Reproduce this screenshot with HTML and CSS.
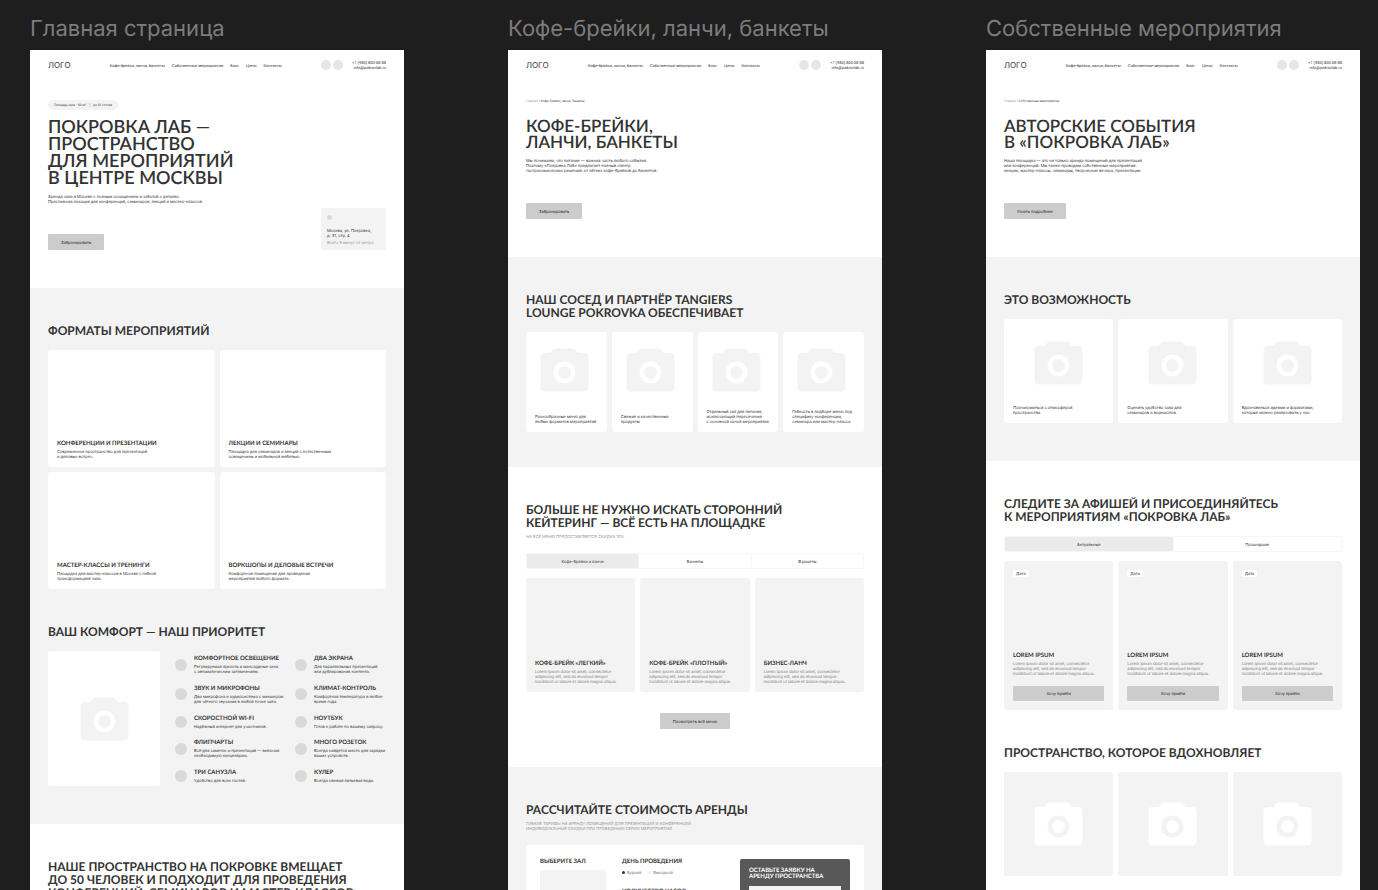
FILE: index.html
```html
<!DOCTYPE html>
<html lang="ru">
<head>
    <meta charset="UTF-8">
    <meta name="viewport" content="width=device-width, initial-scale=1.0">
    <title>Покровка Лаб</title>
    <link rel="stylesheet" href="styles.css">
</head>
<body>
    <svg class="sprite" aria-hidden="true">
        <symbol id="camera" viewBox="0 0 49 44">
            <path fill-rule="evenodd" d="M4.500 5H9.500C11 5 11.500 4 12.500 2.500C13.500 1 14 .500 15.500 .500H32.500C34 .500 34.500 1 35.500 2.500C36.500 4 37.500 5 39 5H44.500C47 5 48.500 7 48.500 9V39C48.500 42 46.500 43.500 44 43.500H5C2 43.500 .500 42 .500 39V9C.500 7 2 5 4.500 5ZM24.500 13.500A11 11 0 1 0 24.500 35.500A11 11 0 1 0 24.500 13.500ZM24.500 18.200A6.300 6.300 0 1 1 24.500 30.800A6.300 6.300 0 1 1 24.500 18.200Z"/>
        </symbol>
    </svg>

    <main class="canvas">
        <section class="board">
            <h3 class="board-name">Главная страница</h3>
            <div class="frame">
                <header class="header">
                    <a class="logo" href="#">ЛОГО</a>
                    <nav class="nav">
                        <a href="#">Кофе-брейки, ланчи, банкеты</a>
                        <a href="#">Собственные мероприятия</a>
                        <a href="#">Блог</a>
                        <a href="#">Цены</a>
                        <a href="#">Контакты</a>
                    </nav>
                    <div class="contacts">
                        <span class="dot"></span>
                        <span class="dot"></span>
                        <p class="phone">+7 (980) 800-08-88<br>info@pokrovlab.ru</p>
                    </div>
                </header>
                <div class="hero">
                    <p class="badge"><span>Площадь зала - 60 м²</span><span>|</span><span>до 50 гостей</span></p>
                    <h1 class="title title-main">ПОКРОВКА ЛАБ —<br>ПРОСТРАНСТВО<br>ДЛЯ МЕРОПРИЯТИЙ<br>В ЦЕНТРЕ МОСКВЫ</h1>
                    <p class="lead">Аренда зала в Москве с полным оснащением и заботой о деталях.<br>Престижная локация для конференций, семинаров, лекций и мастер-классов</p>
                    <div class="hero-bottom">
                        <button class="btn">Забронировать</button>
                        <div class="address">
                            <span class="address-dot"></span>
                            <p class="address-text">Москва, ул. Покровка,<br>д. 31, стр. 4</p>
                            <p class="address-note">Всего 5 минут от метро</p>
                        </div>
                    </div>
                </div>
                <div class="section grey">
                    <h2 class="heading">ФОРМАТЫ МЕРОПРИЯТИЙ</h2>
                    <div class="grid two">
                        <article class="card format">
                            <h4>КОНФЕРЕНЦИИ И ПРЕЗЕНТАЦИИ</h4>
                            <p>Современное пространство для презентаций<br>и деловых встреч.</p>
                        </article>
                        <article class="card format">
                            <h4>ЛЕКЦИИ И СЕМИНАРЫ</h4>
                            <p>Площадка для семинаров и лекций с естественным<br>освещением и мобильной мебелью.</p>
                        </article>
                        <article class="card format">
                            <h4>МАСТЕР-КЛАССЫ И ТРЕНИНГИ</h4>
                            <p>Площадка для мастер-классов в Москве с гибкой<br>трансформацией зала.</p>
                        </article>
                        <article class="card format">
                            <h4>ВОРКШОПЫ И ДЕЛОВЫЕ ВСТРЕЧИ</h4>
                            <p>Комфортное помещение для проведения<br>мероприятий любого формата.</p>
                        </article>
                    </div>
                    <h2 class="heading next">ВАШ КОМФОРТ — НАШ ПРИОРИТЕТ</h2>
                    <div class="comfort">
                        <div class="photo"><svg class="camera"><use href="#camera"/></svg></div>
                        <ul class="features">
                            <li><span class="bullet"></span><div><h4>КОМФОРТНОЕ ОСВЕЩЕНИЕ</h4><p>Регулируемая яркость и мансардные окна<br>с автоматическим затемнением.</p></div></li>
                            <li><span class="bullet"></span><div><h4>ЗВУК И МИКРОФОНЫ</h4><p>Два микрофона и аудиосистема с микшером<br>для чёткого звучания в любой точке зала.</p></div></li>
                            <li><span class="bullet"></span><div><h4>СКОРОСТНОЙ WI-FI</h4><p>Надёжный интернет для участников.</p></div></li>
                            <li><span class="bullet"></span><div><h4>ФЛИПЧАРТЫ</h4><p>Всё для заметок и презентаций — включая<br>необходимую канцелярию.</p></div></li>
                            <li><span class="bullet"></span><div><h4>ТРИ САНУЗЛА</h4><p>Удобство для всех гостей.</p></div></li>
                        </ul>
                        <ul class="features">
                            <li><span class="bullet"></span><div><h4>ДВА ЭКРАНА</h4><p>Для параллельных презентаций<br>или дублирования контента.</p></div></li>
                            <li><span class="bullet"></span><div><h4>КЛИМАТ-КОНТРОЛЬ</h4><p>Комфортная температура в любое<br>время года.</p></div></li>
                            <li><span class="bullet"></span><div><h4>НОУТБУК</h4><p>Готов к работе по вашему запросу.</p></div></li>
                            <li><span class="bullet"></span><div><h4>МНОГО РОЗЕТОК</h4><p>Всегда найдется место для зарядки<br>ваших устройств.</p></div></li>
                            <li><span class="bullet"></span><div><h4>КУЛЕР</h4><p>Всегда свежая питьевая вода.</p></div></li>
                        </ul>
                    </div>
                </div>
                <div class="section">
                    <h2 class="heading">НАШЕ ПРОСТРАНСТВО НА ПОКРОВКЕ ВМЕЩАЕТ<br>ДО 50 ЧЕЛОВЕК И ПОДХОДИТ ДЛЯ ПРОВЕДЕНИЯ<br>КОНФЕРЕНЦИЙ, СЕМИНАРОВ И МАСТЕР-КЛАССОВ</h2>
                </div>
            </div>
        </section>

        <section class="board">
            <h3 class="board-name">Кофе-брейки, ланчи, банкеты</h3>
            <div class="frame">
                <header class="header">
                    <a class="logo" href="#">ЛОГО</a>
                    <nav class="nav">
                        <a href="#">Кофе-брейки, ланчи, банкеты</a>
                        <a href="#">Собственные мероприятия</a>
                        <a href="#">Блог</a>
                        <a href="#">Цены</a>
                        <a href="#">Контакты</a>
                    </nav>
                    <div class="contacts">
                        <span class="dot"></span>
                        <span class="dot"></span>
                        <p class="phone">+7 (980) 800-08-88<br>info@pokrovlab.ru</p>
                    </div>
                </header>
                <div class="hero">
                    <p class="crumbs"><a href="#">Главная</a> / Кофе-брейки, ланчи, банкеты</p>
                    <h1 class="title">КОФЕ-БРЕЙКИ,<br>ЛАНЧИ, БАНКЕТЫ</h1>
                    <p class="lead">Мы понимаем, что питание — важная часть любого события.<br>Поэтому «Покровка Лаб» предлагает полный спектр<br>гастрономических решений: от лёгких кофе-брейков до банкетов.</p>
                    <button class="btn">Забронировать</button>
                </div>
                <div class="section grey tight">
                    <h2 class="heading">НАШ СОСЕД И ПАРТНЁР TANGIERS<br>LOUNGE POKROVKA ОБЕСПЕЧИВАЕТ</h2>
                    <div class="grid four">
                        <article class="card service"><svg class="camera"><use href="#camera"/></svg><p>Разнообразные меню для<br>любых форматов мероприятий</p></article>
                        <article class="card service"><svg class="camera"><use href="#camera"/></svg><p>Свежие и качественные<br>продукты</p></article>
                        <article class="card service"><svg class="camera"><use href="#camera"/></svg><p>Отдельный зал для питания,<br>исключающий пересечение<br>с основной зоной мероприятия</p></article>
                        <article class="card service"><svg class="camera"><use href="#camera"/></svg><p>Гибкость в подборе меню под<br>специфику конференции,<br>семинара или мастер-класса</p></article>
                    </div>
                </div>
                <div class="section">
                    <h2 class="heading">БОЛЬШЕ НЕ НУЖНО ИСКАТЬ СТОРОННИЙ<br>КЕЙТЕРИНГ — ВСЁ ЕСТЬ НА ПЛОЩАДКЕ</h2>
                    <p class="sub">НА ВСЁ МЕНЮ ПРЕДОСТАВЛЯЕТСЯ СКИДКА 10%</p>
                    <div class="tabs">
                        <button class="tab active">Кофе-брейки и ланчи</button>
                        <button class="tab">Банкеты</button>
                        <button class="tab">Фуршеты</button>
                    </div>
                    <div class="grid three">
                        <article class="card menu"><h4>КОФЕ-БРЕЙК «ЛЕГКИЙ»</h4><p>Lorem ipsum dolor sit amet, consectetur<br>adipiscing elit, sed do eiusmod tempor<br>incididunt ut labore et dolore magna aliqua.</p></article>
                        <article class="card menu"><h4>КОФЕ-БРЕЙК «ПЛОТНЫЙ»</h4><p>Lorem ipsum dolor sit amet, consectetur<br>adipiscing elit, sed do eiusmod tempor<br>incididunt ut labore et dolore magna aliqua.</p></article>
                        <article class="card menu"><h4>БИЗНЕС-ЛАНЧ</h4><p>Lorem ipsum dolor sit amet, consectetur<br>adipiscing elit, sed do eiusmod tempor<br>incididunt ut labore et dolore magna aliqua.</p></article>
                    </div>
                    <button class="btn center">Посмотреть всё меню</button>
                </div>
                <div class="section grey">
                    <h2 class="heading">РАССЧИТАЙТЕ СТОИМОСТЬ АРЕНДЫ</h2>
                    <p class="sub">ГИБКИЕ ТАРИФЫ НА АРЕНДУ ПОМЕЩЕНИЙ ДЛЯ ПРЕЗЕНТАЦИЙ И КОНФЕРЕНЦИЙ.<br>ИНДИВИДУАЛЬНЫЕ СКИДКИ ПРИ ПРОВЕДЕНИИ СЕРИИ МЕРОПРИЯТИЙ</p>
                    <form class="calc">
                        <div class="calc-hall">
                            <h4>ВЫБЕРИТЕ ЗАЛ</h4>
                            <div class="hall"></div>
                        </div>
                        <div class="calc-options">
                            <h4>ДЕНЬ ПРОВЕДЕНИЯ</h4>
                            <div class="radios">
                                <label><input type="radio" name="day" checked>Будний</label>
                                <label><input type="radio" name="day">Выходной</label>
                            </div>
                            <h4>КОЛИЧЕСТВО ЧАСОВ</h4>
                        </div>
                        <div class="request">
                            <h4><label for="name">ОСТАВЬТЕ ЗАЯВКУ НА<br>АРЕНДУ ПРОСТРАНСТВА</label></h4>
                            <input type="text" id="name">
                        </div>
                    </form>
                </div>
            </div>
        </section>

        <section class="board">
            <h3 class="board-name">Собственные мероприятия</h3>
            <div class="frame">
                <header class="header">
                    <a class="logo" href="#">ЛОГО</a>
                    <nav class="nav">
                        <a href="#">Кофе-брейки, ланчи, банкеты</a>
                        <a href="#">Собственные мероприятия</a>
                        <a href="#">Блог</a>
                        <a href="#">Цены</a>
                        <a href="#">Контакты</a>
                    </nav>
                    <div class="contacts">
                        <span class="dot"></span>
                        <span class="dot"></span>
                        <p class="phone">+7 (980) 800-08-88<br>info@pokrovlab.ru</p>
                    </div>
                </header>
                <div class="hero">
                    <p class="crumbs"><a href="#">Главная</a> / Собственные мероприятия</p>
                    <h1 class="title">АВТОРСКИЕ СОБЫТИЯ<br>В «ПОКРОВКА ЛАБ»</h1>
                    <p class="lead">Наша площадка — это не только аренда помещений для презентаций<br>или конференций. Мы также проводим собственные мероприятия:<br>лекции, мастер-классы, семинары, творческие вечера, презентации</p>
                    <button class="btn">Узнать подробнее</button>
                </div>
                <div class="section grey">
                    <h2 class="heading">ЭТО ВОЗМОЖНОСТЬ</h2>
                    <div class="grid three">
                        <article class="card chance"><svg class="camera"><use href="#camera"/></svg><p>Познакомиться с атмосферой<br>пространства</p></article>
                        <article class="card chance"><svg class="camera"><use href="#camera"/></svg><p>Оценить удобство зала для<br>семинаров и воркшопов</p></article>
                        <article class="card chance"><svg class="camera"><use href="#camera"/></svg><p>Вдохновиться идеями и форматами,<br>которые можно реализовать у нас</p></article>
                    </div>
                </div>
                <div class="section">
                    <h2 class="heading">СЛЕДИТЕ ЗА АФИШЕЙ И ПРИСОЕДИНЯЙТЕСЬ<br>К МЕРОПРИЯТИЯМ «ПОКРОВКА ЛАБ»</h2>
                    <div class="tabs">
                        <button class="tab active">Актуальные</button>
                        <button class="tab">Прошедшие</button>
                    </div>
                    <div class="grid three">
                        <article class="card event"><span class="date">Дата</span><h4>LOREM IPSUM</h4><p>Lorem ipsum dolor sit amet, consectetur<br>adipiscing elit, sed do eiusmod tempor<br>incididunt ut labore et dolore magna aliqua.</p><button class="btn wide">Хочу прийти</button></article>
                        <article class="card event"><span class="date">Дата</span><h4>LOREM IPSUM</h4><p>Lorem ipsum dolor sit amet, consectetur<br>adipiscing elit, sed do eiusmod tempor<br>incididunt ut labore et dolore magna aliqua.</p><button class="btn wide">Хочу прийти</button></article>
                        <article class="card event"><span class="date">Дата</span><h4>LOREM IPSUM</h4><p>Lorem ipsum dolor sit amet, consectetur<br>adipiscing elit, sed do eiusmod tempor<br>incididunt ut labore et dolore magna aliqua.</p><button class="btn wide">Хочу прийти</button></article>
                    </div>
                    <h2 class="heading next">ПРОСТРАНСТВО, КОТОРОЕ ВДОХНОВЛЯЕТ</h2>
                    <div class="grid three">
                        <div class="card gallery"><svg class="camera"><use href="#camera"/></svg></div>
                        <div class="card gallery"><svg class="camera"><use href="#camera"/></svg></div>
                        <div class="card gallery"><svg class="camera"><use href="#camera"/></svg></div>
                    </div>
                </div>
            </div>
        </section>
    </main>
</body>
</html>
```
FILE: styles.css
```css
* {
    box-sizing: border-box;
    margin: 0;
    padding: 0;
}

body {
    height: 100vh;
    overflow: hidden;
    background-color: #1e1e1e;
    color: #333;
    font-family: Inter, "Liberation Sans", sans-serif;
    font-size: 4px;
    line-height: 5px;
    white-space: nowrap;
    text-rendering: geometricPrecision;
}

a {
    color: inherit;
    text-decoration: none;
}

.sprite {
    display: none;
}

.canvas {
    display: grid;
    grid-template-columns: repeat(3, minmax(0, 1fr));
    gap: 104px;
    padding: 14px 18px 0 30px;
}

.board-name {
    height: 36px;
    color: #7c7c7c;
    font-size: 22px;
    font-weight: 400;
    line-height: 30px;
}

.frame {
    background-color: #fff;
}

/* header */
.header {
    display: flex;
    justify-content: space-between;
    align-items: center;
    height: 30px;
    padding: 0 18px;
}

.logo {
    font-size: 8px;
    line-height: 10px;
}

.nav {
    display: flex;
    gap: 7px;
    font-family: Roboto, sans-serif;
}

.contacts {
    display: flex;
    align-items: center;
    gap: 2px;
}

.dot {
    width: 10px;
    height: 10px;
    border-radius: 50%;
    background-color: #e6e6e6;
}

.phone {
    margin-left: 7px;
    font-family: Roboto, sans-serif;
    text-align: right;
}

/* first screen */
.hero {
    padding: 18px 18px 38px;
}

.badge {
    display: flex;
    align-items: center;
    gap: 3px;
    width: fit-content;
    height: 10px;
    margin: 2px 0 8px;
    padding: 0 6px;
    border-radius: 5px;
    background-color: #f3f3f3;
    font-size: 3px;
}

.crumbs {
    margin-bottom: 14px;
    font-size: 3px;
    line-height: 6px;
}

.crumbs a {
    color: #999;
}

.title,
.heading,
h4 {
    font-family: Lato, "Open Sans", sans-serif;
    font-weight: 700;
}

.title {
    font-size: 17px;
    font-weight: 600;
    line-height: 16px;
}

.title-main {
    font-size: 18px;
    line-height: 17px;
}

.lead {
    margin: 8px 0 30px;
}

.hero-bottom {
    display: flex;
    justify-content: space-between;
    align-items: flex-end;
}

.title-main + .lead {
    margin: 8px 0 4px;
}

.btn {
    display: block;
    height: 16px;
    padding: 0 13px;
    border: none;
    border-radius: 1px;
    background-color: #ccc;
    color: #222;
    font: 4px/5px Inter, "Liberation Sans", sans-serif;
    text-rendering: inherit;
    cursor: pointer;
}

.center {
    margin: 21px auto 0;
}

.wide {
    width: 100%;
    height: 15px;
    margin-top: 10px;
}

.address {
    width: 65px;
    height: 42px;
    padding: 7px 6px;
    border-radius: 2px;
    background-color: #f3f3f3;
}

.address-dot {
    display: block;
    width: 5px;
    height: 5px;
    margin-bottom: 8px;
    border-radius: 50%;
    background-color: #d6d6d6;
}

.address-note {
    margin-top: 2px;
    color: #999;
}

/* sections */
.section {
    padding: 36px 18px 38px;
}

.tight {
    padding-bottom: 35px;
}

.grey {
    background-color: #f3f3f3;
}

.heading {
    margin-bottom: 13px;
    font-size: 12px;
    line-height: 13px;
}

.next {
    margin-top: 36px;
}

.sub {
    margin: -8px 0 14px;
    color: #999;
}

.grid {
    display: grid;
    gap: 5px;
}

.two {
    grid-template-columns: repeat(2, 1fr);
}

.three {
    grid-template-columns: repeat(3, 1fr);
}

.four {
    grid-template-columns: repeat(4, 1fr);
}

h4 {
    font-size: 6px;
    line-height: 8px;
}

h4 + p {
    margin-top: 1px;
}

.card {
    display: flex;
    flex-direction: column;
    justify-content: flex-end;
    min-width: 0;
    padding: 8px 9px;
    border-radius: 3px;
    background-color: #f3f3f3;
}

.grey .card {
    background-color: #fff;
}

.format {
    height: 117px;
}

.camera {
    width: 49px;
    height: 44px;
    fill: #f3f3f3;
}

.service,
.chance {
    justify-content: space-between;
}

.service {
    height: 100px;
    padding-top: 16px;
}

.service .camera {
    margin-left: 5px;
}

.chance {
    height: 104px;
    padding-top: 22px;
}

.chance .camera {
    align-self: center;
}

.menu {
    height: 114px;
}

.menu p,
.event p {
    color: #777;
}

.event {
    height: 149px;
    padding: 9px;
}

.date {
    align-self: flex-start;
    margin-bottom: auto;
    padding: 1px 3px;
    border-radius: 1px;
    background-color: #fff;
}

.gallery {
    justify-content: center;
    align-items: center;
    height: 104px;
}

.gallery .camera {
    fill: #fff;
}

/* comfort list */
.comfort {
    display: grid;
    grid-template-columns: 112px 105px 1fr;
    gap: 15px;
    height: 135px;
}

.photo {
    display: flex;
    justify-content: center;
    align-items: center;
    border-radius: 2px;
    background-color: #fff;
}

.features {
    display: flex;
    flex-direction: column;
    justify-content: space-between;
    padding: 4px 0 3px;
    list-style: none;
}

.features li {
    display: flex;
    align-items: center;
    gap: 7px;
}

.bullet {
    flex-shrink: 0;
    width: 12px;
    height: 12px;
    border-radius: 50%;
    background-color: #d9d9d9;
}

/* tabs */
.tabs {
    display: flex;
    height: 16px;
    margin-bottom: 9px;
    border: 1px solid #f6f6f6;
}

.tab {
    flex: 1;
    border: none;
    border-right: 1px solid #f6f6f6;
    background-color: #fff;
    color: #333;
    font: 4px/5px Inter, "Liberation Sans", sans-serif;
    text-rendering: inherit;
    cursor: pointer;
}

.tab:last-child {
    border-right: none;
}

.tab.active {
    background-color: #ebebeb;
}

/* price form */
.calc {
    display: grid;
    grid-template-columns: 66px 102px 110px;
    gap: 16px;
    padding: 14px;
    border-radius: 2px;
    background-color: #fff;
}

.calc h4 {
    margin-top: -1px;
}

.hall {
    height: 66px;
    margin-top: 4px;
    border-radius: 3px;
    background-color: #f3f3f3;
}

.radios {
    display: flex;
    gap: 7px;
    margin: 4px 0 14px;
    color: #777;
}

.radios label {
    display: flex;
    align-items: center;
    gap: 2px;
}

.radios input {
    width: 3px;
    height: 3px;
    border-radius: 50%;
    background-color: #eee;
    appearance: none;
}

.radios input:checked {
    background-color: #333;
}

.request {
    padding: 9px;
    border-radius: 2px;
    background-color: #585858;
    color: #fff;
}

.request .request-title,
.calc .request h4 {
    margin-top: 0;
    line-height: 6px;
}

.request input {
    display: block;
    width: 100%;
    height: 14px;
    margin-top: 6px;
    border: none;
    background-color: #f3f3f3;
}
```
